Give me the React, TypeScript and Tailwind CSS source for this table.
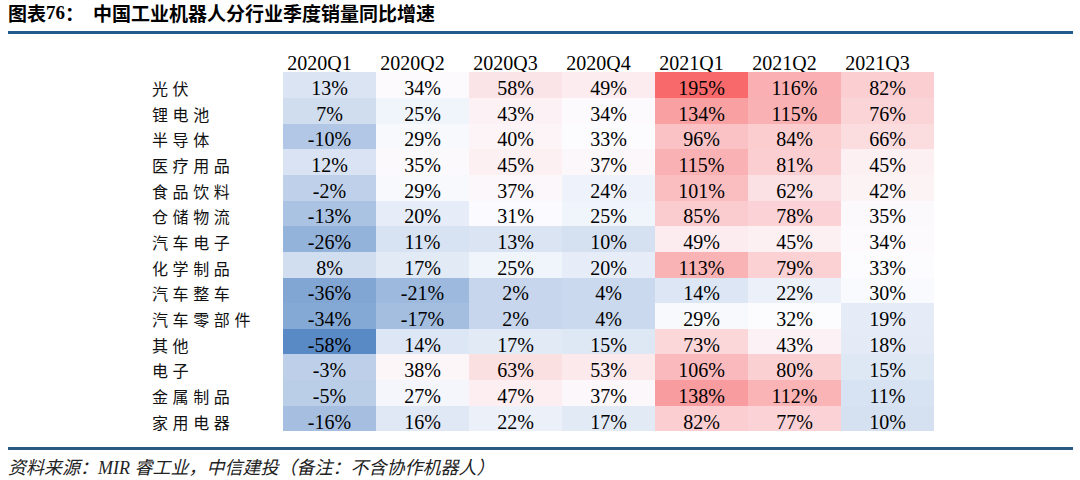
import React from "react";

const cols = ["2020Q1", "2020Q2", "2020Q3", "2020Q4", "2021Q1", "2021Q2", "2021Q3"];

const rows: [string, number[]][] = [
  ["光伏", [13, 34, 58, 49, 195, 116, 82]],
  ["锂电池", [7, 25, 43, 34, 134, 115, 76]],
  ["半导体", [-10, 29, 40, 33, 96, 84, 66]],
  ["医疗用品", [12, 35, 45, 37, 115, 81, 45]],
  ["食品饮料", [-2, 29, 37, 24, 101, 62, 42]],
  ["仓储物流", [-13, 20, 31, 25, 85, 78, 35]],
  ["汽车电子", [-26, 11, 13, 10, 49, 45, 34]],
  ["化学制品", [8, 17, 25, 20, 113, 79, 33]],
  ["汽车整车", [-36, -21, 2, 4, 14, 22, 30]],
  ["汽车零部件", [-34, -17, 2, 4, 29, 32, 19]],
  ["其他", [-58, 14, 17, 15, 73, 43, 18]],
  ["电子", [-3, 38, 63, 53, 106, 80, 15]],
  ["金属制品", [-5, 27, 47, 37, 138, 112, 11]],
  ["家用电器", [-16, 16, 22, 17, 82, 77, 10]],
];

const all = rows.flatMap((r) => r[1]).sort((a, b) => a - b);
const minV = all[0];
const maxV = all[all.length - 1];
const medPos = (all.length - 1) * 0.5;
const med = all[Math.floor(medPos)] + (all[Math.ceil(medPos)] - all[Math.floor(medPos)]) * (medPos - Math.floor(medPos));

const BLUE = [0x5a, 0x8a, 0xc6];
const WHITE = [0xfc, 0xfc, 0xff];
const RED = [0xf8, 0x69, 0x6b];

function mix(a: number[], b: number[], t: number) {
  return `rgb(${a.map((v, i) => Math.round(v + (b[i] - v) * t)).join(",")})`;
}

function colorFor(v: number) {
  if (v <= med) {
    const t = (v - minV) / (med - minV);
    return mix(BLUE, WHITE, t);
  }
  const t = (v - med) / (maxV - med);
  return mix(WHITE, RED, t);
}

const serif = { fontFamily: '"Liberation Serif", "Times New Roman", serif' };

export default function App() {
  return (
    <div className="w-[1080px] h-[480px] bg-white flex flex-col text-black overflow-hidden">
      <div className="h-[31px] pl-[8px] pt-[3px] flex items-start leading-[19px] text-[19px] font-bold font-['Noto_Sans_CJK_SC',sans-serif]">
        <span>图表</span>
        <span className="font-['Liberation_Serif',serif]">76</span>
        <span>：</span>
        <span className="ml-[9px]">中国工业机器人分行业季度销量同比增速</span>
      </div>
      <div className="ml-[8px] w-[1065px] h-[3px] bg-[#1f5a8a]" />
      <div className="mt-[12.6px] flex flex-col" style={serif}>
        <div className="flex h-[25.67px]">
          <div className="w-[283px]" />
          {cols.map((c) => (
            <div key={c} className="w-[93px] flex items-center justify-center pt-[8px] pr-[20px] text-[20px] leading-[20px]">
              {c}
            </div>
          ))}
        </div>
        {rows.map(([label, vals]) => (
          <div key={label} className="flex h-[25.67px]">
            <div className="w-[283px] pl-[152px] flex items-center pt-[6px] text-[16px] leading-[18px] tracking-[4.6px] font-['Noto_Sans_CJK_SC',sans-serif] text-[#111]">
              {label}
            </div>
            {vals.map((v, i) => (
              <div
                key={i}
                className="w-[93px] flex items-center justify-center pt-[6px] text-[20px] leading-[20px]"
                style={{ backgroundColor: colorFor(v) }}
              >
                {v}%
              </div>
            ))}
          </div>
        ))}
      </div>
      <div className="mt-[15.3px] ml-[8px] w-[1065px] h-[3px] bg-[#2a5a82]" />
      <div className="pl-[8px] pt-[6px] text-[18px] leading-[21px] italic text-[#222] font-['Noto_Sans_CJK_SC',sans-serif]">
        资料来源：<span className="font-['Liberation_Serif',serif]">MIR </span>睿工业，中信建投（备注：不含协作机器人）
      </div>
    </div>
  );
}
